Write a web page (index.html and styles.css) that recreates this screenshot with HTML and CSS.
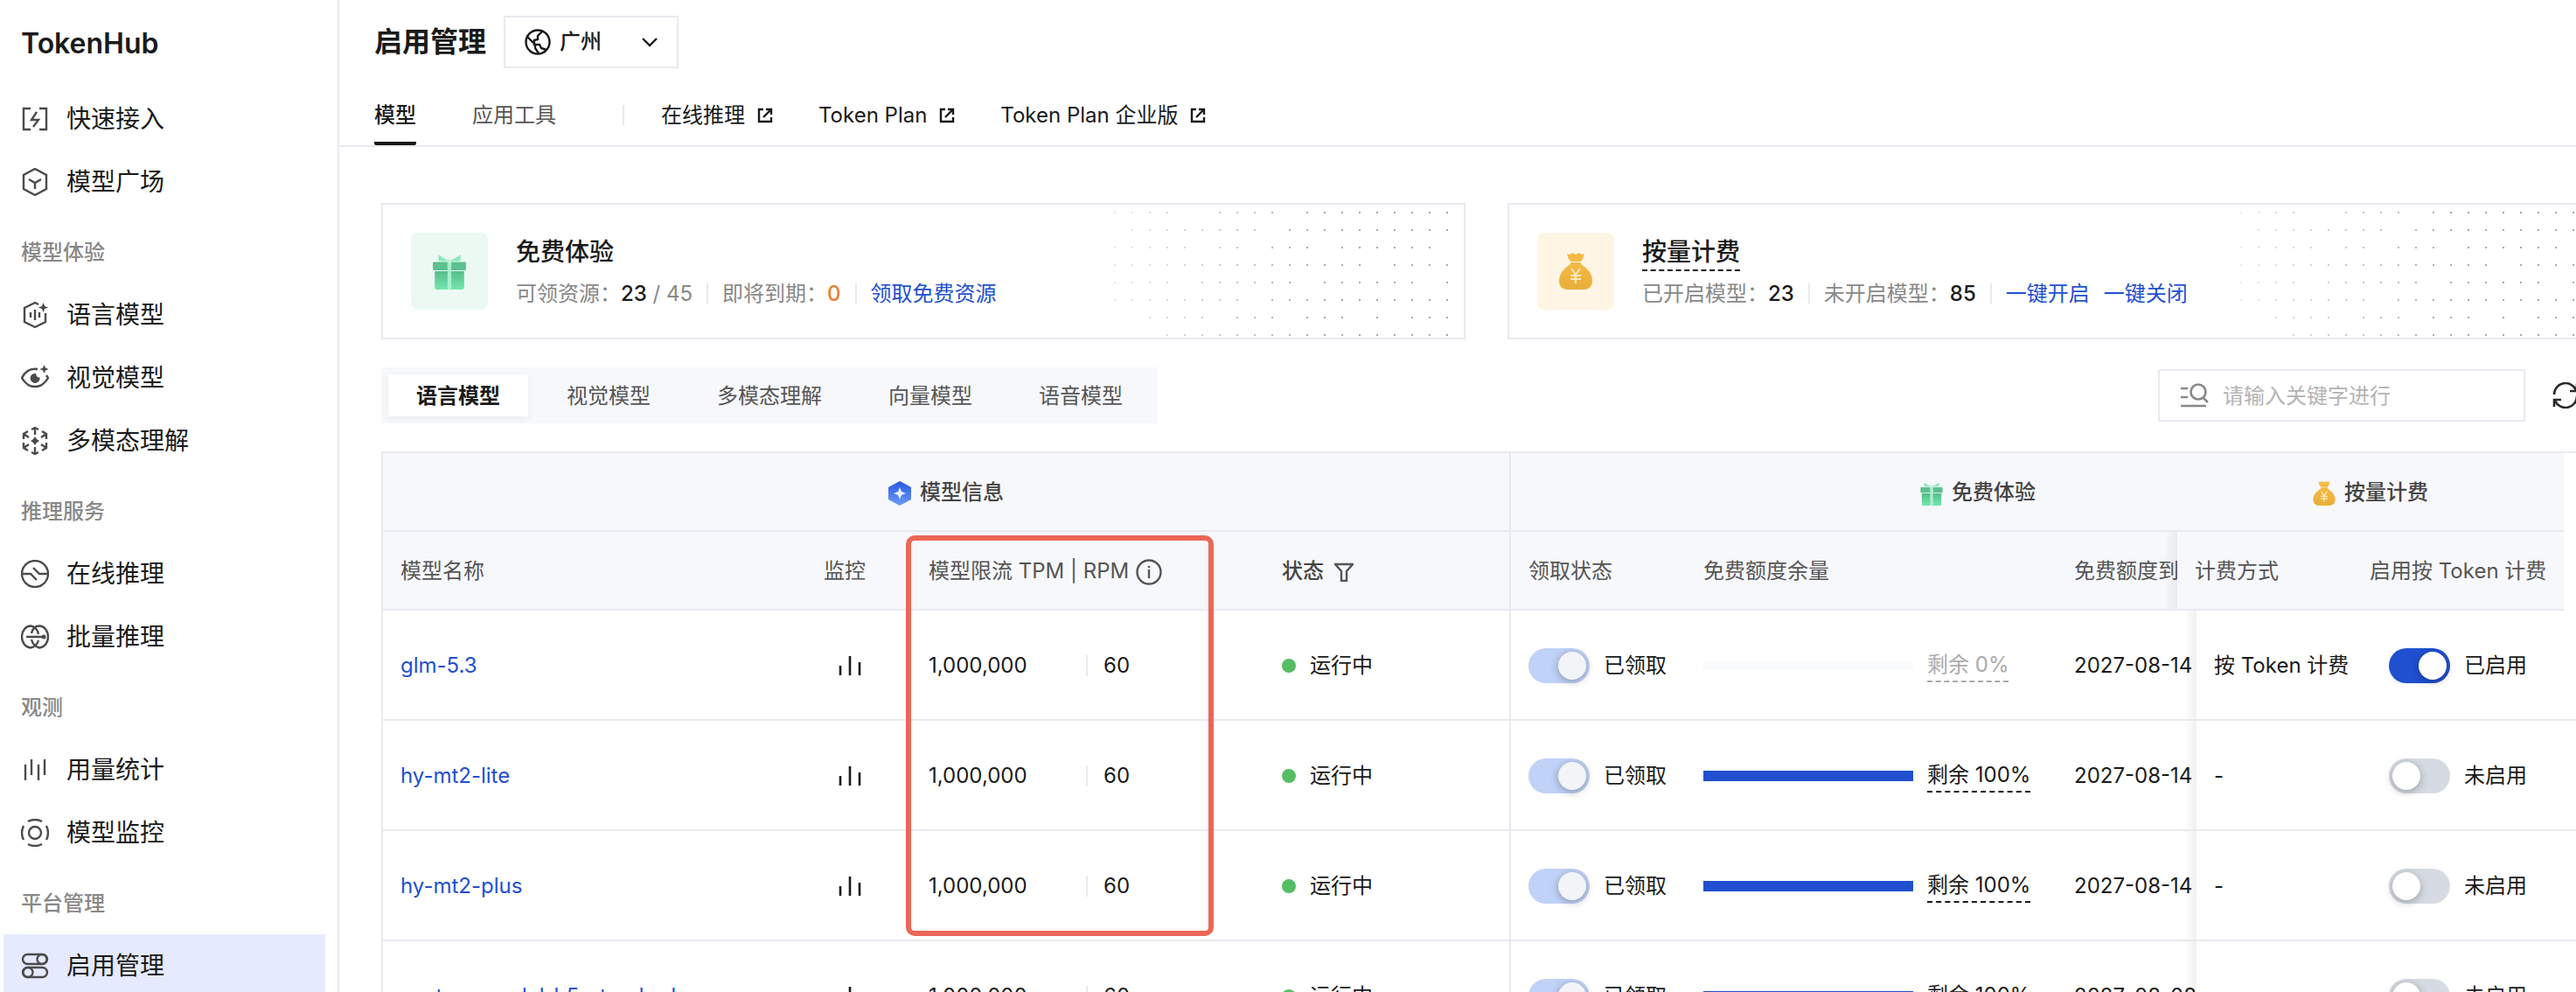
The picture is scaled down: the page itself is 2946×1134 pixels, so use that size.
FILE: index.html
```html
<!DOCTYPE html>
<html lang="zh-CN">
<head>
  <meta charset="UTF-8">
  <meta name="viewport" content="width=device-width, initial-scale=1.0">
  <title>TokenHub - 启用管理</title>
  <link rel="stylesheet" href="styles.css">
</head>
<body>

  <!-- Shared icons -->
  <svg class="sprite" aria-hidden="true">
    <defs>
      <linearGradient id="giftFill" x1="0" y1="0" x2="0" y2="1">
        <stop offset="0" stop-color="#57bd8a"/>
        <stop offset="1" stop-color="#74e6b0"/>
      </linearGradient>
      <linearGradient id="moneyFill" x1="0" y1="0" x2="0" y2="1">
        <stop offset="0" stop-color="#f5b945"/>
        <stop offset="1" stop-color="#e9ae3a"/>
      </linearGradient>
      <linearGradient id="infoFill" x1="0" y1="0" x2="0" y2="1">
        <stop offset="0" stop-color="#2459e0"/>
        <stop offset="1" stop-color="#6f9bfa"/>
      </linearGradient>
      <linearGradient id="dotFade" x1="0" y1="0" x2="1" y2="0">
        <stop offset="0" stop-color="#fff" stop-opacity="0.15"/>
        <stop offset="0.6" stop-color="#fff" stop-opacity="0.6"/>
        <stop offset="1" stop-color="#fff" stop-opacity="0.6"/>
      </linearGradient>
      <mask id="dotMask"><rect width="400" height="152" fill="url(#dotFade)"/></mask>
    </defs>
    <symbol id="gift" viewBox="0 0 36 40">
      <path d="M6 2l6 4q3 2 6 2q3 0 6-2l6-4v6q0 1-2 1H8q-2 0-2-1z" fill="#8beabb"/>
      <path d="M0 11q0-1 1-1h15v9H1q-1 0-1-1zM20 10h15q1 0 1 1v7q0 1-1 1H20z" fill="#5cc08f"/>
      <path d="M16 10h4v30h-4z" fill="#a9f0cd"/>
      <path d="M2 20h14v20H4q-2 0-2-2zM20 20h14v18q0 2-2 2H20z" fill="url(#giftFill)"/>
    </symbol>
    <symbol id="money" viewBox="0 0 38 42">
      <path d="M9 1l3 1 3-2 4 2 4-2 3 2 3-1q-1 5-4 9H13Q10 6 9 1z" fill="#f5b945"/>
      <path d="M13 11h12v2q13 8 13 19 0 10-11 10H11Q0 42 0 32 0 21 13 13z" fill="url(#moneyFill)"/>
      <path d="M14 18l5 7 5-7M19 25v10M13 26h12M13 30h12" fill="none" stroke="#fde9bd" stroke-width="2"/>
    </symbol>
    <symbol id="external" viewBox="0 0 18 18">
      <path d="M7 2H2v14h14v-5M10 2h6v6M16 2L7 11" fill="none" stroke="currentColor" stroke-width="2.4"/>
    </symbol>
    <symbol id="bars" viewBox="0 0 26 24">
      <path d="M2 12v11M13 1v22M24 8v15" fill="none" stroke="currentColor" stroke-width="2.6"/>
    </symbol>
    <symbol id="dots" viewBox="0 0 400 152">
      <path mask="url(#dotMask)" fill="none" stroke="#707070" stroke-width="2" stroke-dasharray="2 18"
        d="M0 9h62M120 9h62M220 9h82M320 9h62M20 29h142M200 29h182M0 49h82M120 49h22M180 49h42M260 49h102M0 69h282M320 69h62M0 89h62M100 89h102M240 89h102M380 89h2M0 109h142M180 109h202M40 129h62M140 129h42M220 129h42M300 129h2M340 129h42M60 149h322"/>
    </symbol>
  </svg>

  <div class="layout">
    <aside class="sidebar">
      <div class="brand">TokenHub</div>
      <nav>
        <a class="nav-item" href="#">
          <svg viewBox="0 0 32 32"><path d="M11 4H3v24h8M21 4h8v24h-8M18 8l-6 9h8l-6 8"/></svg>
          快速接入
        </a>
        <a class="nav-item" href="#">
          <svg viewBox="0 0 32 32"><path d="M16 1l13 7v16l-13 7-13-7V8zM9 13l7 4 7-4M16 17v7"/></svg>
          模型广场
        </a>

        <div class="nav-title">模型体验</div>
        <a class="nav-item" href="#">
          <svg viewBox="0 0 32 32"><path d="M20 4l-4-2L4 8v16l12 6 12-6V14M11 13v6M16 10v12M21 13v6"/><path class="solid" d="M25.500 2l1.600 4 4 1.500-4 1.500-1.600 4-1.600-4-4-1.500 4-1.500z"/></svg>
          语言模型
        </a>
        <a class="nav-item" href="#">
          <svg viewBox="0 0 32 32"><path d="M19 6Q7 4 1 16q6 10 15 10t15-10l-2-3"/><path class="solid" d="M17 11a5.500 5.500 0 1 0 4.500 4.500q-4 0-4.500-4.500zM26.500 1l1.500 3.500L31.500 6 28 7.500 26.500 11 25 7.500 21.500 6 25 4.500z"/></svg>
          视觉模型
        </a>
        <a class="nav-item" href="#">
          <svg viewBox="0 0 32 32"><path d="M12 3l4-2 4 2M16 2v7M12 29l4 2 4-2M16 30v-7M3 14V8l5-3M3 8l6 4M29 14V8l-5-3M29 8l-6 4M3 18v6l5 3M3 24l6-4M29 18v6l-5 3M29 24l-6-4"/><path class="solid" d="M16 11l2 3 3 2-3 2-2 3-2-3-3-2 3-2z"/></svg>
          多模态理解
        </a>

        <div class="nav-title">推理服务</div>
        <a class="nav-item" href="#">
          <svg viewBox="0 0 32 32"><circle cx="16" cy="16" r="15"/><path d="M1 16h10l7 7M31 16H21l-7-7"/></svg>
          在线推理
        </a>
        <a class="nav-item" href="#">
          <svg viewBox="0 0 32 32"><path d="M20 13A10 12.500 0 0 0 11 3.500A10 12.500 0 0 0 11 28.500Q18 27 20 20M12 12Q14 3.500 21 3.500A10 12.500 0 0 1 21 28.500Q14 27 12 19M6 16h19"/><circle class="solid" cx="26" cy="16" r="2.500"/></svg>
          批量推理
        </a>

        <div class="nav-title">观测</div>
        <a class="nav-item" href="#">
          <svg viewBox="0 0 32 32"><path d="M5 10v18M12 4v18M20 10v18M27 4v18"/></svg>
          用量统计
        </a>
        <a class="nav-item" href="#">
          <svg viewBox="0 0 32 32"><circle cx="16" cy="16" r="7"/><path d="M8 3q8-4 16 0M8 29q8 4 16 0M3 8q-4 8 0 16M29 8q4 8 0 16"/></svg>
          模型监控
        </a>

        <div class="nav-title">平台管理</div>
        <a class="nav-item active" href="#">
          <svg viewBox="0 0 32 32"><rect x="2" y="3" width="28" height="11" rx="5.500"/><circle cx="24" cy="8.500" r="5.500"/><rect x="2" y="18" width="28" height="11" rx="5.500"/><circle cx="8" cy="23.500" r="5.500"/></svg>
          启用管理
        </a>
      </nav>
    </aside>

    <main class="main">
      <header class="page-header">
        <div class="title-row">
          <h1>启用管理</h1>
          <div class="region">
            <svg class="region-icon" viewBox="0 0 30 30"><circle cx="15" cy="15" r="13.500"/><path d="M20 3l-5 5v4l-4 1v5h6l2 4 6 2M3 9l9 9v4l4 6"/></svg>
            <select aria-label="地域">
              <option>广州</option>
            </select>
            <svg class="region-arrow" viewBox="0 0 18 12"><path d="M1 2l8 8 8-8"/></svg>
          </div>
        </div>
        <nav class="tabs">
          <a class="tab active" href="#">模型</a>
          <a class="tab muted" href="#">应用工具</a>
          <span class="tab-divider"></span>
          <a class="tab" href="#">在线推理<svg><use href="#external"/></svg></a>
          <a class="tab" href="#">Token Plan<svg><use href="#external"/></svg></a>
          <a class="tab" href="#">Token Plan 企业版<svg><use href="#external"/></svg></a>
        </nav>
      </header>

      <div class="content">
        <section class="cards">
          <div class="card">
            <div class="card-icon green"><svg><use href="#gift"/></svg></div>
            <div class="card-text">
              <h2>免费体验</h2>
              <div class="stats">
                <span>可领资源：<b>23</b> / 45</span>
                <i></i>
                <span>即将到期：<b class="warn">0</b></span>
                <i></i>
                <a href="#">领取免费资源</a>
              </div>
            </div>
            <svg class="card-dots"><use href="#dots"/></svg>
          </div>
          <div class="card">
            <div class="card-icon yellow"><svg><use href="#money"/></svg></div>
            <div class="card-text">
              <h2 class="dashed">按量计费</h2>
              <div class="stats">
                <span>已开启模型：<b>23</b></span>
                <i></i>
                <span>未开启模型：<b>85</b></span>
                <i></i>
                <a href="#">一键开启</a>
                <a href="#">一键关闭</a>
              </div>
            </div>
            <svg class="card-dots"><use href="#dots"/></svg>
          </div>
        </section>

        <div class="toolbar">
          <div class="segment">
            <button type="button" class="active">语言模型</button>
            <button type="button">视觉模型</button>
            <button type="button">多模态理解</button>
            <button type="button">向量模型</button>
            <button type="button">语音模型</button>
          </div>
          <div class="toolbar-right">
            <label class="search">
              <svg viewBox="0 0 32 28"><path d="M0 6h8M0 16h8M0 26h29M26 17l5 5"/><circle cx="20" cy="10" r="8.500"/></svg>
              <input type="text" placeholder="请输入关键字进行" aria-label="搜索">
            </label>
            <button type="button" class="refresh" aria-label="刷新">
              <svg viewBox="0 0 30 30"><path d="M2 14A13 13 0 0 1 27 9M28 2v8h-8M28 16A13 13 0 0 1 3 21M2 28v-8h8"/></svg>
            </button>
          </div>
        </div>

        <div class="table-box">
          <div class="table-head">
            <table>
              <colgroup>
                <col class="c-name"><col class="c-monitor"><col class="c-limit"><col class="c-status"><col class="c-claim"><col class="c-quota"><col class="c-date"><col class="c-mode"><col class="c-enable">
              </colgroup>
              <thead>
                <tr class="group">
                  <th colspan="4" class="line"><svg class="i-info" viewBox="0 0 26 28"><path d="M13 0l13 7v14l-13 7-13-7V7z" fill="url(#infoFill)"/><path d="M13 7l2 5 5 2-5 2-2 5-2-5-5-2 5-2z" fill="#e8effe"/></svg>模型信息</th>
                  <th colspan="3"><svg class="i-gift"><use href="#gift"/></svg>免费体验</th>
                  <th colspan="2" class="fixed-group"><svg class="i-money"><use href="#money"/></svg>按量计费</th>
                </tr>
                <tr>
                  <th>模型名称</th>
                  <th>监控</th>
                  <th>模型限流 TPM | RPM<svg class="i-tip" viewBox="0 0 30 30"><circle cx="15" cy="15" r="13.500"/><path d="M15 12v10M15 8v2"/></svg></th>
                  <th class="line strong">状态<svg class="i-filter" viewBox="0 0 22 22"><path d="M1 2h20l-7 8v11H8V10z"/></svg></th>
                  <th>领取状态</th>
                  <th>免费额度余量</th>
                  <th>免费额度到</th>
                  <th class="fixed-mode">计费方式</th>
                  <th class="fixed-enable">启用按 Token 计费</th>
                </tr>
              </thead>
            </table>
          </div>

          <div class="table-body">
            <table>
              <colgroup>
                <col class="c-name"><col class="c-monitor"><col class="c-limit"><col class="c-status"><col class="c-claim"><col class="c-quota"><col class="c-date"><col class="c-mode"><col class="c-enable">
              </colgroup>
              <tbody>
                <tr>
                  <td><a href="#">glm-5.3</a></td>
                  <td><button type="button" class="monitor" aria-label="监控"><svg><use href="#bars"/></svg></button></td>
                  <td><div class="limit"><span>1,000,000</span><span>60</span></div></td>
                  <td class="line"><span class="status">运行中</span></td>
                  <td><label class="switch"><input type="checkbox" checked disabled>已领取</label></td>
                  <td><div class="quota empty"><div class="bar"><div style="width: 0%"></div></div><span>剩余 0%</span></div></td>
                  <td>2027-08-14</td>
                  <td class="fixed-mode">按 Token 计费</td>
                  <td class="fixed-enable"><label class="switch"><input type="checkbox" checked>已启用</label></td>
                </tr>
                <tr>
                  <td><a href="#">hy-mt2-lite</a></td>
                  <td><button type="button" class="monitor" aria-label="监控"><svg><use href="#bars"/></svg></button></td>
                  <td><div class="limit"><span>1,000,000</span><span>60</span></div></td>
                  <td class="line"><span class="status">运行中</span></td>
                  <td><label class="switch"><input type="checkbox" checked disabled>已领取</label></td>
                  <td><div class="quota"><div class="bar"><div style="width: 100%"></div></div><span>剩余 100%</span></div></td>
                  <td>2027-08-14</td>
                  <td class="fixed-mode">-</td>
                  <td class="fixed-enable"><label class="switch"><input type="checkbox">未启用</label></td>
                </tr>
                <tr>
                  <td><a href="#">hy-mt2-plus</a></td>
                  <td><button type="button" class="monitor" aria-label="监控"><svg><use href="#bars"/></svg></button></td>
                  <td><div class="limit"><span>1,000,000</span><span>60</span></div></td>
                  <td class="line"><span class="status">运行中</span></td>
                  <td><label class="switch"><input type="checkbox" checked disabled>已领取</label></td>
                  <td><div class="quota"><div class="bar"><div style="width: 100%"></div></div><span>剩余 100%</span></div></td>
                  <td>2027-08-14</td>
                  <td class="fixed-mode">-</td>
                  <td class="fixed-enable"><label class="switch"><input type="checkbox">未启用</label></td>
                </tr>
                <tr>
                  <td><a href="#">custom-model-h5-standard</a></td>
                  <td><button type="button" class="monitor" aria-label="监控"><svg><use href="#bars"/></svg></button></td>
                  <td><div class="limit"><span>1,000,000</span><span>60</span></div></td>
                  <td class="line"><span class="status">运行中</span></td>
                  <td><label class="switch"><input type="checkbox" checked disabled>已领取</label></td>
                  <td><div class="quota"><div class="bar"><div style="width: 100%"></div></div><span>剩余 100%</span></div></td>
                  <td>2027-08-08</td>
                  <td class="fixed-mode">-</td>
                  <td class="fixed-enable"><label class="switch"><input type="checkbox">未启用</label></td>
                </tr>
              </tbody>
            </table>
          </div>

          <div class="highlight"></div>
        </div>
      </div>
    </main>
  </div>

</body>
</html>
```

FILE: styles.css
```css
* {
  box-sizing: border-box;
}

body {
  margin: 0;
  font-family: Inter, "Noto Sans CJK SC", sans-serif;
  font-size: 24px;
  line-height: 36px;
  color: #1a1a1a;
  background-color: #fff;
}

h1, h2 {
  margin: 0;
}

a {
  color: #1f50d0;
  text-decoration: none;
}

button, input, select {
  font: inherit;
  color: inherit;
}

button {
  border: none;
  background: none;
  padding: 0;
  cursor: pointer;
}

svg {
  flex-shrink: 0;
}

.sprite {
  position: absolute;
  width: 0;
  height: 0;
}

.layout {
  display: flex;
  height: 100vh;
  overflow: hidden;
}

/* Sidebar */
.sidebar {
  flex: 0 0 388px;
  border-right: 2px solid #e9e9f0;
  padding: 0 14px 0 4px;
}

.brand {
  height: 100px;
  padding-left: 20px;
  line-height: 100px;
  font-size: 32px;
  font-weight: 600;
}

.nav-item {
  display: flex;
  align-items: center;
  gap: 20px;
  height: 72px;
  padding-left: 20px;
  font-size: 28px;
  color: #1a1a1a;
}

.nav-item.active {
  background-color: #e5eaff;
}

.nav-item svg {
  width: 32px;
  height: 32px;
  fill: none;
  stroke: #4b4b4b;
  stroke-width: 2.4;
}

.nav-item svg .solid {
  fill: #4b4b4b;
  stroke: none;
}

.nav-title {
  height: 80px;
  padding: 10px 0 0 20px;
  line-height: 70px;
  font-weight: 500;
  color: #888;
}

/* Header */
.main {
  flex: 1;
  min-width: 0;
  overflow: hidden;
}

.page-header {
  border-bottom: 2px solid #e9e9f0;
  padding: 18px 40px 0;
}

.title-row {
  display: flex;
  align-items: center;
  gap: 20px;
}

h1 {
  font-size: 32px;
  font-weight: 600;
}

.region {
  display: flex;
  align-items: center;
  width: 200px;
  height: 60px;
  padding: 0 22px;
  border: 2px solid #e9e9f0;
}

.region svg {
  fill: none;
  stroke: #1a1a1a;
  stroke-width: 2.4;
}

.region-icon {
  width: 30px;
  height: 30px;
}

.region-arrow {
  width: 18px;
  height: 12px;
}

.region select {
  flex: 1;
  min-width: 0;
  padding: 0 10px;
  border: none;
  background: none;
  appearance: none;
  font-weight: 500;
}

.tabs {
  display: flex;
  align-items: center;
  height: 88px;
  gap: 52px;
}

.tab {
  display: flex;
  align-items: center;
  gap: 14px;
  height: 88px;
  padding: 36px 0 12px;
  border-bottom: 4px solid transparent;
  color: #1a1a1a;
}

.tab.active {
  font-weight: 500;
  margin-right: 12px;
  border-radius: 2px;
  border-bottom-color: #1a1a1a;
}

.tab.muted {
  color: #555;
}

.tab svg {
  width: 18px;
  height: 18px;
}

.tab-divider {
  width: 2px;
  height: 24px;
  margin: 20px -10px 0 24px;
  background-color: #e9e9f0;
}

/* Content runs past the right edge of the window */
.content {
  margin: 64px -18px 0 48px;
}

.cards {
  display: grid;
  grid-template-columns: 1fr 1fr;
  gap: 48px;
}

.card {
  position: relative;
  display: flex;
  align-items: center;
  gap: 32px;
  height: 156px;
  padding: 0 32px;
  border: 2px solid #e9e9f0;
}

.card-icon {
  display: flex;
  align-items: center;
  justify-content: center;
  width: 88px;
  height: 88px;
  border-radius: 8px;
}

.card-icon svg {
  width: 38px;
  height: 42px;
}

.card-icon.green {
  background-color: #ecf9f3;
}

.card-icon.yellow {
  background-color: #fef5e4;
}

.card-text {
  padding-top: 4px;
}

.card h2 {
  width: max-content;
  height: 40px;
  margin-bottom: 8px;
  font-size: 28px;
  line-height: 36px;
  font-weight: 500;
}

.card h2.dashed {
  border-bottom: 2px dashed #1a1a1a;
}

.card-dots {
  position: absolute;
  top: 0;
  right: 0;
  width: 400px;
  height: 152px;
}

.stats {
  display: flex;
  align-items: center;
  gap: 16px;
  color: #888;
}

.stats b {
  font-weight: 500;
  color: #1a1a1a;
}

.stats b.warn {
  color: #ed7b2f;
}

.stats i {
  width: 2px;
  height: 24px;
  background-color: #e9e9f0;
}

/* Toolbar */
.toolbar {
  display: flex;
  justify-content: space-between;
  align-items: center;
  margin: 32px 0;
}

.segment {
  display: flex;
  gap: 12px;
  padding: 8px;
  background-color: #f7f8fc;
}

.segment button {
  height: 48px;
  padding: 2px 32px 0;
  color: #555;
}

.segment button.active {
  background-color: #fff;
  box-shadow: 0 2px 8px rgba(0, 0, 0, 0.06);
  font-weight: 700;
  color: #1a1a1a;
}

.toolbar-right {
  display: flex;
  align-items: center;
  gap: 16px;
}

.search {
  display: flex;
  align-items: center;
  gap: 16px;
  width: 420px;
  height: 60px;
  padding: 0 24px;
  border: 2px solid #e9e9f0;
}

.search svg {
  width: 32px;
  height: 28px;
  fill: none;
  stroke: #888;
  stroke-width: 2.6;
}

.search input {
  flex: 1;
  min-width: 0;
  padding: 2px 0 0;
  border: none;
  outline: none;
  background: none;
}

.search input::placeholder {
  color: #b4b4b4;
}

.refresh {
  display: flex;
  align-items: center;
  justify-content: center;
  width: 60px;
  height: 60px;
}

.refresh svg {
  width: 30px;
  height: 30px;
  fill: none;
  stroke: #2a2a2a;
  stroke-width: 2.6;
}

/* Table */
.table-box {
  position: relative;
  border-top: 2px solid #e9e9f0;
  border-left: 2px solid #e9e9f0;
}

.table-head {
  margin-right: 32px;
  overflow: hidden;
}

.table-body {
  margin-right: 10px;
  overflow: hidden;
}

table {
  width: 2800px;
  table-layout: fixed;
  border-collapse: separate;
  border-spacing: 0;
}

.c-name { width: 484px; }
.c-monitor { width: 120px; }
.c-limit { width: 404px; }
.c-status { width: 282px; }
.c-claim { width: 200px; }
.c-quota { width: 424px; }
.c-date { width: 444px; }
.c-mode { width: 200px; }
.c-enable { width: 242px; }

th, td {
  padding: 2px 20px 0;
  text-align: left;
  white-space: nowrap;
  border-bottom: 2px solid #e9e9f0;
  background-color: #fff;
}

th {
  height: 90px;
  font-weight: 400;
  color: #555;
  background-color: #f7f8fc;
}

td {
  height: 126px;
}

th svg {
  vertical-align: middle;
}

.group th {
  text-align: center;
  font-weight: 500;
  color: #444;
}

th.strong {
  font-weight: 500;
  color: #444;
}

.line {
  border-right: 2px solid #e9e9f0;
}

.fixed-group, .fixed-enable {
  position: sticky;
  right: 0;
}

.fixed-mode {
  position: sticky;
  right: 242px;
}

/* Shade on the columns that scroll under the fixed ones */
.fixed-mode::before {
  content: "";
  position: absolute;
  top: 0;
  bottom: 0;
  left: -14px;
  width: 14px;
  background: linear-gradient(to right, rgba(0, 0, 0, 0), rgba(0, 0, 0, 0.06));
}

.i-info, .i-gift, .i-money {
  width: 26px;
  height: 28px;
  margin-right: 10px;
}

.i-tip, .i-filter {
  fill: none;
  stroke: #555;
  stroke-width: 2.4;
}

.i-tip {
  width: 30px;
  height: 30px;
  margin-left: 8px;
}

.i-filter {
  width: 22px;
  height: 22px;
  margin-left: 12px;
}

.monitor {
  display: flex;
  align-items: center;
  justify-content: center;
  width: 60px;
}

.monitor svg {
  width: 26px;
  height: 24px;
}

.limit {
  display: flex;
  align-items: center;
}

.limit span:first-child {
  width: 180px;
}

.limit span:last-child {
  padding-left: 18px;
  line-height: 24px;
  border-left: 2px solid #e9e9f0;
}

.status {
  display: flex;
  align-items: center;
  gap: 16px;
}

.status::before {
  content: "";
  width: 16px;
  height: 16px;
  border-radius: 50%;
  background-color: #57bd65;
}

.switch {
  display: flex;
  align-items: center;
  gap: 16px;
}

.switch input {
  appearance: none;
  display: flex;
  width: 70px;
  height: 40px;
  margin: 0;
  padding: 4px;
  border-radius: 20px;
  background-color: #d6dbe3;
}

.switch input::before {
  content: "";
  width: 32px;
  height: 32px;
  border-radius: 50%;
  background-color: #fff;
  box-shadow: 0 2px 10px rgba(0, 0, 0, 0.3);
}

.switch input:checked {
  justify-content: flex-end;
  background-color: #2050d0;
}

.switch input:disabled {
  background-color: #c0d2f8;
}

.switch input:disabled::before {
  background-color: #f2f4f8;
}

.quota {
  display: flex;
  align-items: center;
  gap: 16px;
}

.quota .bar {
  width: 240px;
  height: 12px;
  background-color: #fafbfd;
}

.quota .bar div {
  height: 12px;
  background-color: #2050d0;
}

.quota span {
  border-bottom: 2px dashed #1a1a1a;
}

.quota.empty span {
  color: #aaa;
  border-bottom-color: #aaa;
}

/* Frame around the rate limit column */
.highlight {
  position: absolute;
  top: 94px;
  left: 598px;
  width: 352px;
  height: 458px;
  border: 6px solid #eb6757;
  border-radius: 10px;
  pointer-events: none;
}
```
